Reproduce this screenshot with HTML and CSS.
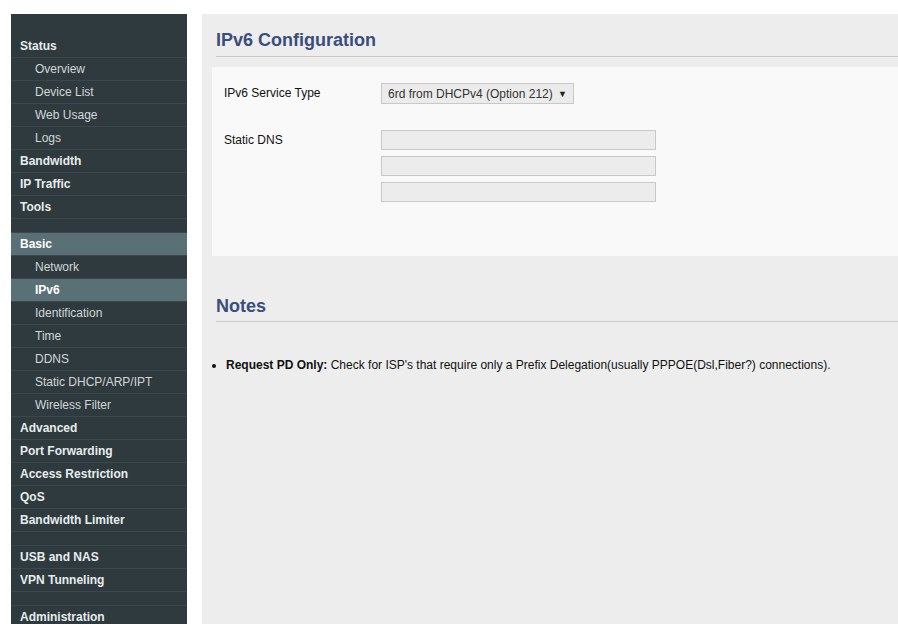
FILE: index.html
```html
<!DOCTYPE html>
<html>
<head>
<meta charset="utf-8">
<link rel="stylesheet" href="styles.css">
</head>
<body>
<div class="layout">
  <nav class="sidebar">
    <div class="spacer top"></div>
    <a class="item head">Status</a>
    <a class="item sub">Overview</a>
    <a class="item sub">Device List</a>
    <a class="item sub">Web Usage</a>
    <a class="item sub">Logs</a>
    <a class="item head">Bandwidth</a>
    <a class="item head">IP Traffic</a>
    <a class="item head">Tools</a>
    <div class="spacer"></div>
    <a class="item head active">Basic</a>
    <a class="item sub">Network</a>
    <a class="item sub active">IPv6</a>
    <a class="item sub">Identification</a>
    <a class="item sub">Time</a>
    <a class="item sub">DDNS</a>
    <a class="item sub">Static DHCP/ARP/IPT</a>
    <a class="item sub">Wireless Filter</a>
    <a class="item head">Advanced</a>
    <a class="item head">Port Forwarding</a>
    <a class="item head">Access Restriction</a>
    <a class="item head">QoS</a>
    <a class="item head">Bandwidth Limiter</a>
    <div class="spacer"></div>
    <a class="item head">USB and NAS</a>
    <a class="item head">VPN Tunneling</a>
    <div class="spacer"></div>
    <a class="item head">Administration</a>
  </nav>
  <main class="content">
    <h2 class="title">IPv6 Configuration</h2>
    <section class="panel">
      <div class="row">
        <div class="label">IPv6 Service Type</div>
        <div class="field">
          <div class="select"><span>6rd from DHCPv4 (Option 212)</span><span class="arrow">▼</span></div>
        </div>
      </div>
      <div class="row dns">
        <div class="label">Static DNS</div>
        <div class="field stack">
          <div class="input"></div>
          <div class="input"></div>
          <div class="input"></div>
        </div>
      </div>
    </section>
    <h2 class="title notes-title">Notes</h2>
    <ul class="notes">
      <li><b>Request PD Only:</b> Check for ISP's that require only a Prefix Delegation(usually PPPOE(Dsl,Fiber?) connections).</li>
    </ul>
  </main>
</div>
</body>
</html>
```
FILE: styles.css
```css
html, body {
  margin: 0;
  padding: 0;
  background: #ffffff;
}
body {
  padding: 14px 0 0 11px;
  font-family: "Liberation Sans", Arial, sans-serif;
  font-size: 12px;
  overflow: hidden;
  height: 610px;
}
.layout {
  display: flex;
  align-items: stretch;
  height: 610px;
}
.sidebar {
  width: 176px;
  flex: none;
  background: #2f3a3e;
  display: flex;
  flex-direction: column;
}
.spacer {
  height: 13px;
  flex: none;
  border-bottom: 1px solid #3b474b;
}
.spacer.top {
  height: 21px;
  border-bottom: none;
}
.item {
  display: block;
  flex: none;
  height: 22px;
  line-height: 22px;
  border-bottom: 1px solid #3b474b;
  color: #e4eaeb;
  white-space: nowrap;
}
.item.head {
  font-weight: bold;
  padding-left: 9px;
  color: #e6ecee;
}
.item.sub {
  padding-left: 24px;
  color: #cfd7d9;
}
.item.active {
  background: #587076;
  color: #ffffff;
  font-weight: bold;
}
.content {
  flex: 1;
  margin-left: 15px;
  background: #ededed;
  padding-left: 10px;
}
.title {
  margin: 16px 0 0 4px;
  font-size: 18px;
  line-height: 20px;
  font-weight: bold;
  color: #3a4e7c;
  padding-bottom: 6px;
  border-bottom: 1px solid #c9c9c9;
}
.panel {
  margin-top: 10px;
  background: #f9f9f9;
  height: 189px;
  box-sizing: border-box;
  padding: 16px 0 0 12px;
}
.row {
  display: flex;
}
.label {
  width: 157px;
  flex: none;
  color: #111;
  line-height: 21px;
}
.row.dns {
  margin-top: 26px;
}
.row.dns .label {
  line-height: 20px;
}
.select {
  width: 193px;
  height: 21px;
  box-sizing: border-box;
  border: 1px solid #c8c8c8;
  background: #ebebeb;
  display: flex;
  align-items: center;
  justify-content: space-between;
  padding: 0 6px 0 6px;
  color: #333;
}
.arrow {
  font-size: 9px;
  color: #222;
}
.stack {
  display: flex;
  flex-direction: column;
  gap: 6px;
}
.input {
  width: 275px;
  height: 20px;
  box-sizing: border-box;
  border: 1px solid #c8c8c8;
  background: #ececec;
}
.notes-title {
  margin-top: 40px;
  padding-bottom: 5px;
}
.notes {
  margin: 36px 0 0 0;
  padding-left: 14px;
  line-height: 14px;
  font-size: 12px;
  color: #111;
}
```
